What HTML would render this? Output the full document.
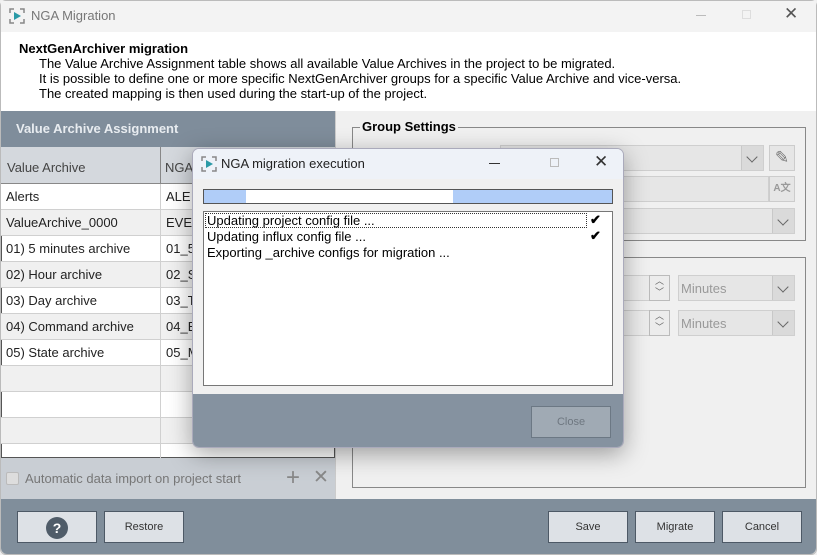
<!DOCTYPE html>
<html><head><meta charset="utf-8"><style>
*{box-sizing:border-box;margin:0;padding:0}
body{width:817px;height:555px;position:relative;overflow:hidden;background:#f0f0f0;font-family:"Liberation Sans",sans-serif;font-size:13px;color:#000}
.a{position:absolute}
.cell{position:absolute;height:26px;line-height:26px;padding-left:5px;border-bottom:1px solid #d0d0d0;border-right:1px solid #d0d0d0;overflow:hidden;white-space:nowrap;font-size:13px;color:#222}
.btn{position:absolute;background:#dde1e6;border:1px solid #4d5966;text-align:center;font-size:11px;color:#333}
.fld{position:absolute;background:#e6e6e6;border:1px solid #cfcfcf}
.arr{position:absolute;right:0;top:0;bottom:0;width:22px;background:#dadada;border-left:1px solid #c8c8c8}
.chev{position:absolute;left:6px;top:7px;width:8px;height:8px;border-right:1.3px solid #666;border-bottom:1.3px solid #666;transform:rotate(45deg)}
</style></head><body>
<div class="a" style="left:0;top:0;width:817px;height:555px;border:1px solid #bbb;border-radius:6px"></div>
<div class="a" style="left:1px;top:1px;width:815px;height:31px;background:#f3f3f3"></div>
<svg class="a" style="left:9px;top:8px" width="16" height="16" viewBox="0 0 16 16"><path d="M1 5V1h4M11 1h4v4M15 11v4h-4M5 15H1v-4" stroke="#888" fill="none" stroke-width="1.5"/><path d="M5 4l7 4-7 4z" fill="#2a9aa6"/></svg>
<div class="a" style="left:31px;top:8px;font-size:13px;color:#777">NGA Migration</div>
<div class="a" style="left:696px;top:15px;width:10px;height:1px;background:#bbb"></div>
<div class="a" style="left:742px;top:10px;width:9px;height:9px;border:1px solid #ddd"></div>
<div class="a" style="left:784px;top:4px;font-size:17px;color:#555">✕</div>
<div class="a" style="left:1px;top:32px;width:815px;height:79px;background:#fff"></div>
<div class="a" style="left:19px;top:41px;font-weight:bold;font-size:13px">NextGenArchiver migration</div>
<div class="a" style="left:39px;top:56px;line-height:15px;font-size:13px">The Value Archive Assignment table shows all available Value Archives in the project to be migrated.<br>It is possible to define one or more specific NextGenArchiver groups for a specific Value Archive and vice-versa.<br>The created mapping is then used during the start-up of the project.</div>
<div class="a" style="left:1px;top:111px;width:334px;height:36px;background:#7f8d9b"></div>
<div class="a" style="left:16px;top:121px;font-weight:bold;font-size:13px;color:#e8ecf0">Value Archive Assignment</div>
<div class="a" style="left:1px;top:147px;width:334px;height:311px;background:#fff;border:1px solid #555;border-top:none"></div>
<div class="a" style="left:1px;top:147px;width:334px;height:37px;background:#d4d8dd;border-bottom:1px solid #888"></div>
<div class="a" style="left:7px;top:160px;color:#444">Value Archive</div>
<div class="a" style="left:160px;top:147px;width:1px;height:37px;background:#888"></div>
<div class="a" style="left:165px;top:160px;color:#444">NGA</div>
<div class="cell" style="left:1px;top:184px;width:160px;background:#fff">Alerts</div><div class="cell" style="left:161px;top:184px;width:174px">ALE</div>
<div class="cell" style="left:1px;top:210px;width:160px;background:#f0f0f0">ValueArchive_0000</div><div class="cell" style="left:161px;top:210px;width:174px;background:#f0f0f0">EVE</div>
<div class="cell" style="left:1px;top:236px;width:160px">01) 5 minutes archive</div><div class="cell" style="left:161px;top:236px;width:174px">01_5</div>
<div class="cell" style="left:1px;top:262px;width:160px;background:#f0f0f0">02) Hour archive</div><div class="cell" style="left:161px;top:262px;width:174px;background:#f0f0f0">02_S</div>
<div class="cell" style="left:1px;top:288px;width:160px">03) Day archive</div><div class="cell" style="left:161px;top:288px;width:174px">03_T</div>
<div class="cell" style="left:1px;top:314px;width:160px;background:#f0f0f0">04) Command archive</div><div class="cell" style="left:161px;top:314px;width:174px;background:#f0f0f0">04_E</div>
<div class="cell" style="left:1px;top:340px;width:160px">05) State archive</div><div class="cell" style="left:161px;top:340px;width:174px">05_M</div>
<div class="cell" style="left:1px;top:366px;width:160px;background:#f0f0f0"></div><div class="cell" style="left:161px;top:366px;width:174px;background:#f0f0f0"></div>
<div class="cell" style="left:1px;top:392px;width:160px"></div><div class="cell" style="left:161px;top:392px;width:174px"></div>
<div class="cell" style="left:1px;top:418px;width:160px;background:#f0f0f0"></div><div class="cell" style="left:161px;top:418px;width:174px;background:#f0f0f0"></div>
<div class="cell" style="left:1px;top:444px;width:160px;height:14px;border-bottom:none"></div>
<div class="a" style="left:1px;top:458px;width:334px;height:41px;background:#c9ced4"></div>
<div class="a" style="left:6px;top:472px;width:13px;height:13px;background:#ddd;border:1px solid #bbb;border-radius:2px"></div>
<div class="a" style="left:25px;top:471px;color:#777">Automatic data import on project start</div>
<div class="a" style="left:286px;top:464px;font-size:24px;color:#888;font-weight:300">+</div>
<div class="a" style="left:313px;top:466px;font-size:19px;color:#888">✕</div>
<div class="a" style="left:335px;top:111px;width:1px;height:388px;background:#ccc"></div>
<div class="a" style="left:352px;top:127px;width:454px;height:114px;border:1px solid #888"></div>
<div class="a" style="left:360px;top:119px;background:#f0f0f0;padding:0 2px;font-weight:bold;font-size:13px">Group Settings</div>
<div class="fld" style="left:500px;top:145px;width:264px;height:26px"><div class="arr"><div class="chev"></div></div></div>
<div class="a" style="left:769px;top:145px;width:26px;height:26px;background:#e6e6e6;border:1px solid #ccc;font-size:17px;color:#777;text-align:center;line-height:24px">✎</div>
<div class="fld" style="left:500px;top:176px;width:269px;height:26px"></div>
<div class="a" style="left:769px;top:176px;width:26px;height:26px;background:#e6e6e6;border:1px solid #ccc;font-size:10px;color:#999;text-align:center;line-height:24px;font-weight:bold">A文</div>
<div class="fld" style="left:500px;top:208px;width:295px;height:26px"><div class="arr"><div class="chev"></div></div></div>
<div class="a" style="left:352px;top:257px;width:454px;height:231px;border:1px solid #888"></div>
<div class="fld" style="left:600px;top:275px;width:70px;height:26px;background:#ebebeb"></div>
<div class="a" style="left:649px;top:275px;width:21px;height:26px;border:1px solid #bbb;background:#ececec;font-size:9px;color:#666;text-align:center;line-height:11px">︿<br>﹀</div>
<div class="fld" style="left:678px;top:275px;width:117px;height:26px"><div class="a" style="left:2px;top:5px;color:#999">Minutes</div><div class="arr"><div class="chev"></div></div></div>
<div class="fld" style="left:600px;top:310px;width:70px;height:26px;background:#ebebeb"></div>
<div class="a" style="left:649px;top:310px;width:21px;height:26px;border:1px solid #bbb;background:#ececec;font-size:9px;color:#666;text-align:center;line-height:11px">︿<br>﹀</div>
<div class="fld" style="left:678px;top:310px;width:117px;height:26px"><div class="a" style="left:2px;top:5px;color:#999">Minutes</div><div class="arr"><div class="chev"></div></div></div>
<div class="a" style="left:1px;top:499px;width:815px;height:55px;background:#808e9b;border-radius:0 0 6px 6px"></div>
<div class="btn" style="left:17px;top:511px;width:80px;height:32px"><div style="margin:5px auto;width:22px;height:22px;border-radius:50%;background:#4f5c69;color:#fff;font-weight:bold;font-size:14px;line-height:22px">?</div></div>
<div class="btn" style="left:104px;top:511px;width:80px;height:32px;line-height:30px">Restore</div>
<div class="btn" style="left:548px;top:511px;width:80px;height:32px;line-height:30px">Save</div>
<div class="btn" style="left:635px;top:511px;width:80px;height:32px;line-height:30px">Migrate</div>
<div class="btn" style="left:722px;top:511px;width:80px;height:32px;line-height:30px">Cancel</div>
<div class="a" style="left:192px;top:148px;width:432px;height:300px;border-radius:7px;box-shadow:0 6px 24px rgba(0,0,0,.35);overflow:hidden;background:#f0f0f0;border:1px solid #aab">
 <div class="a" style="left:0;top:0;width:432px;height:30px;background:#eef2f8"></div>
 <svg class="a" style="left:8px;top:7px" width="16" height="16" viewBox="0 0 16 16"><path d="M1 5V1h4M11 1h4v4M15 11v4h-4M5 15H1v-4" stroke="#888" fill="none" stroke-width="1.5"/><path d="M5 4l7 4-7 4z" fill="#2a9aa6"/></svg>
 <div class="a" style="left:28px;top:7px;font-size:13px;color:#222">NGA migration execution</div>
 <div class="a" style="left:296px;top:14px;width:11px;height:1px;background:#333"></div>
 <div class="a" style="left:357px;top:9px;width:9px;height:9px;border:1px solid #bbb"></div>
 <div class="a" style="left:401px;top:3px;font-size:17px;color:#333">✕</div>
 <div class="a" style="left:10px;top:40px;width:410px;height:15px;background:#b0cdf8;border:1px solid #555"><div class="a" style="left:42px;top:0;width:207px;height:13px;background:#fff"></div></div>
 <div class="a" style="left:10px;top:62px;width:410px;height:175px;background:#fff;border:1px solid #777"></div>
 <div class="a" style="left:12px;top:64px;width:382px;height:15px;border:1px dotted #333"></div>
 <div class="a" style="left:14px;top:64px;font-size:13px;line-height:16px">Updating project config file ...<br>Updating influx config file ...<br>Exporting _archive configs for migration ...</div>
 <div class="a" style="left:397px;top:63px;font-size:13px;line-height:16px;font-weight:bold">✔<br>✔</div>
 <div class="a" style="left:0;top:245px;width:432px;height:55px;background:#8592a0"></div>
 <div class="a" style="left:338px;top:257px;width:80px;height:32px;background:#a0aab4;border:1px solid #6c7884;color:#6e7780;font-size:11px;text-align:center;line-height:30px">Close</div>
</div>
</body></html>
